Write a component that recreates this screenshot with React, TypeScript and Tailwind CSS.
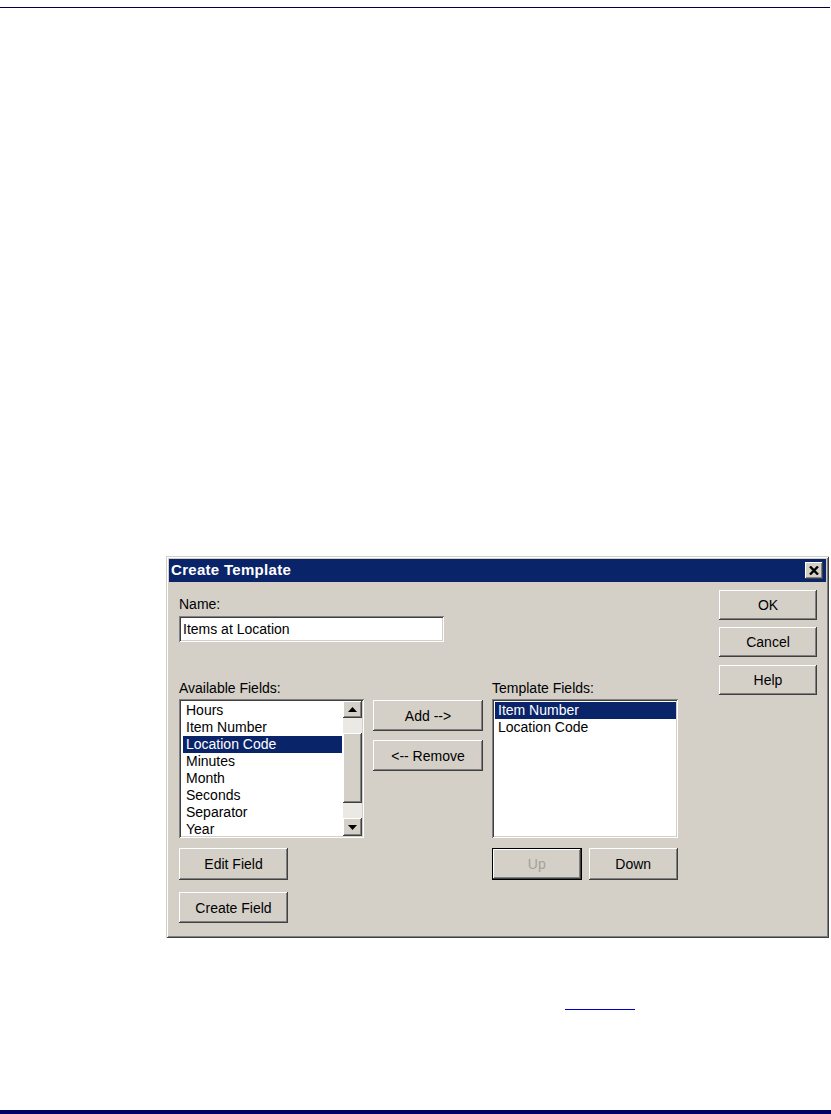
import React from "react";

const RAISED =
  "shadow-[inset_-1px_-1px_0_#404040,inset_1px_1px_0_#ffffff,inset_-2px_-2px_0_#808080,inset_2px_2px_0_#d4d0c8]";
const SUNKEN =
  "shadow-[inset_1px_1px_0_#808080,inset_-1px_-1px_0_#ffffff,inset_2px_2px_0_#404040,inset_-2px_-2px_0_#d4d0c8]";

function Btn({
  children,
  className,
}: {
  children: React.ReactNode;
  className: string;
}) {
  return (
    <div
      className={`flex items-center justify-center bg-[#d4d0c8] text-[14px] text-black leading-none ${RAISED} ${className}`}
    >
      {children}
    </div>
  );
}

function Arrow({ up }: { up?: boolean }) {
  return (
    <svg width="9" height="5" viewBox="0 0 9 5">
      {up ? (
        <polygon points="4.5,0 9,5 0,5" fill="#000" />
      ) : (
        <polygon points="0,0 9,0 4.5,5" fill="#000" />
      )}
    </svg>
  );
}

function Item({ text, sel }: { text: string; sel?: boolean }) {
  return (
    <div
      className={`h-[17px] leading-[17px] pl-[3px] whitespace-nowrap ${
        sel ? "bg-[#0a246a] text-white" : "text-black"
      }`}
    >
      {text}
    </div>
  );
}

export default function App() {
  const avail = [
    "Hours",
    "Item Number",
    "Location Code",
    "Minutes",
    "Month",
    "Seconds",
    "Separator",
    "Year",
  ];
  return (
    <div className="w-[831px] h-[1114px] bg-white overflow-hidden flex flex-col font-['Liberation_Sans',Arial,sans-serif]">
      <div className="mt-[7px] h-px w-[830px] bg-[#000040] shrink-0" />

      {/* Dialog */}
      <div
        className={`mt-[548px] ml-[166px] w-[663px] h-[382px] shrink-0 bg-[#d4d0c8] p-[3px] flex flex-col shadow-[inset_1px_1px_0_#d4d0c8,inset_-1px_-1px_0_#404040,inset_2px_2px_0_#ffffff,inset_-2px_-2px_0_#808080]`}
      >
        {/* Title bar */}
        <div className="h-[23px] bg-[#0a246a] flex items-center pl-[2px] pr-[3px]">
          <span className="text-white font-bold text-[15px] tracking-[0.3px]">
            Create Template
          </span>
          <div
            className={`ml-auto w-[18px] h-[17px] bg-[#d4d0c8] flex items-center justify-center ${RAISED}`}
          >
            <svg width="10" height="9" viewBox="0 0 10 9">
              <path
                d="M1 0.5 L9 8.5 M9 0.5 L1 8.5"
                stroke="#000"
                strokeWidth="2.4"
              />
            </svg>
          </div>
        </div>

        {/* Content */}
        <div className="flex flex-row pl-[10px]">
          {/* Left area */}
          <div className="flex flex-col pt-[14px] w-[499px]">
            <div className="h-[16px] leading-[16px] text-[14px] text-black">
              Name:
            </div>
            <div
              className={`mt-[4px] w-[265px] h-[26px] bg-white flex items-center pl-[4px] text-[14px] text-black ${SUNKEN}`}
            >
              Items at Location
            </div>

            <div className="mt-[38px] flex flex-row">
              {/* Column A */}
              <div className="flex flex-col w-[185px]">
                <div className="h-[16px] leading-[16px] text-[14px] text-black">
                  Available Fields:
                </div>
                <div
                  className={`mt-[3px] h-[139px] bg-white p-[2px] flex flex-row ${SUNKEN}`}
                >
                  <div className="flex-1 flex flex-col pt-[1px] pl-[2px] pr-[1px] text-[14px] overflow-hidden">
                    {avail.map((a) => (
                      <Item key={a} text={a} sel={a === "Location Code"} />
                    ))}
                  </div>
                  <div className="w-[19px] flex flex-col">
                    <div
                      className={`h-[17px] bg-[#d4d0c8] flex items-center justify-center ${RAISED}`}
                    >
                      <Arrow up />
                    </div>
                    <div className="h-[15px] bg-[#ebe9e4]" />
                    <div className={`h-[70px] bg-[#d4d0c8] ${RAISED}`} />
                    <div className="h-[15px] bg-[#ebe9e4]" />
                    <div
                      className={`h-[18px] bg-[#d4d0c8] flex items-center justify-center ${RAISED}`}
                    >
                      <Arrow />
                    </div>
                  </div>
                </div>
                <Btn className="mt-[10px] w-[109px] h-[32px]">Edit Field</Btn>
                <Btn className="mt-[12px] w-[109px] h-[31px]">Create Field</Btn>
              </div>

              {/* Column B */}
              <div className="flex flex-col ml-[9px] w-[110px] pt-[20px]">
                <Btn className="h-[31px]">Add --&gt;</Btn>
                <Btn className="mt-[9px] h-[31px]">&lt;-- Remove</Btn>
              </div>

              {/* Column C */}
              <div className="flex flex-col ml-[9px] w-[186px]">
                <div className="h-[16px] leading-[16px] text-[14px] text-black">
                  Template Fields:
                </div>
                <div
                  className={`mt-[3px] h-[139px] bg-white p-[2px] ${SUNKEN}`}
                >
                  <div className="flex flex-col pt-[1px] pl-[1px] text-[14px]">
                    <Item text="Item Number" sel />
                    <Item text="Location Code" />
                  </div>
                </div>
                <div className="mt-[10px] flex flex-row">
                  <div
                    className={`w-[90px] h-[32px] border border-black bg-[#d4d0c8] flex items-center justify-center text-[14px] text-[#a3a09a] shadow-[inset_-1px_-1px_0_#404040,inset_1px_1px_0_#ffffff,inset_-2px_-2px_0_#808080]`}
                  >
                    Up
                  </div>
                  <Btn className="ml-[7px] w-[90px] h-[32px]">Down</Btn>
                </div>
              </div>
            </div>
          </div>

          {/* Right buttons */}
          <div className="flex flex-col ml-[41px] pt-[8px] w-[98px]">
            <Btn className="h-[30px]">OK</Btn>
            <Btn className="mt-[7px] h-[30px]">Cancel</Btn>
            <Btn className="mt-[8px] h-[30px]">Help</Btn>
          </div>
        </div>
      </div>

      <div className="mt-[71px] ml-[565px] w-[70px] h-px bg-[#0000cc] shrink-0" />
      <div className="mt-auto h-[4px] w-full bg-[#000066] shrink-0" />
    </div>
  );
}
